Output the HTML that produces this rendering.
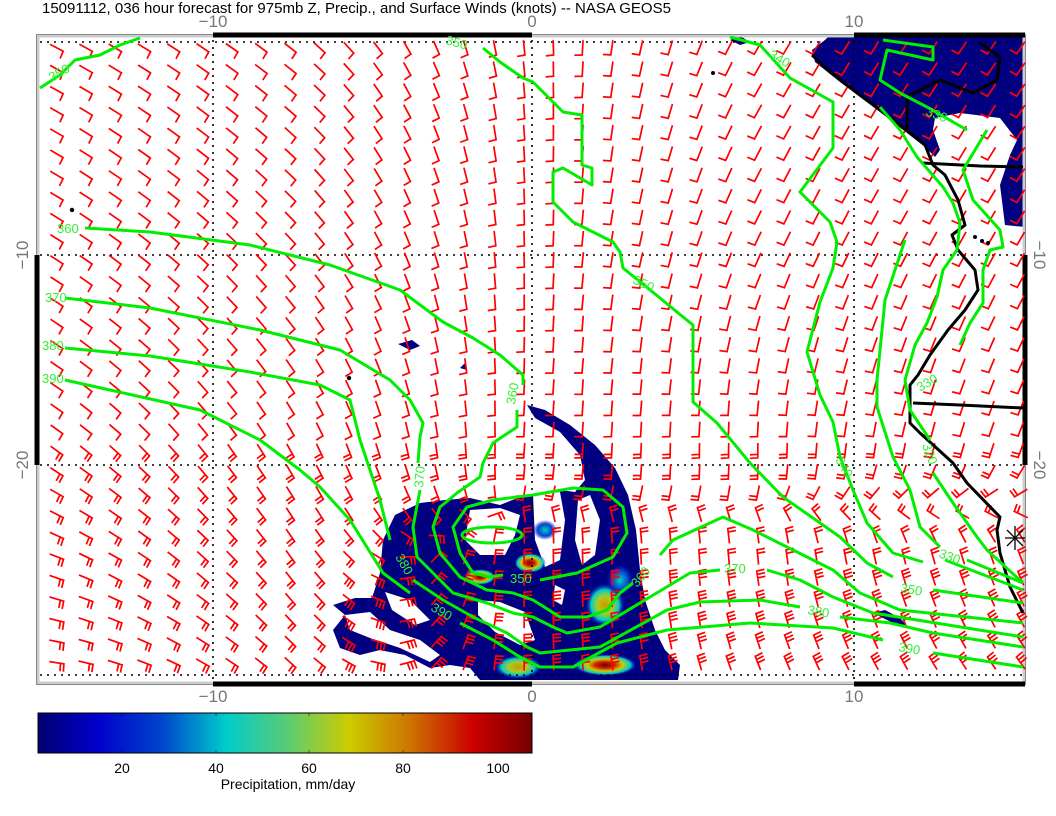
<!DOCTYPE html>
<html><head><meta charset="utf-8"><style>
html,body{margin:0;padding:0;background:#fff;width:1056px;height:816px;overflow:hidden}
svg{display:block}
text{font-family:"Liberation Sans",sans-serif}
</style></head><body>
<svg id="s" width="1056" height="816" viewBox="0 0 1056 816" xmlns="http://www.w3.org/2000/svg">
<defs>
<linearGradient id="cb" x1="0" x2="1" y1="0" y2="0">
<stop offset="0" stop-color="#000070"/>
<stop offset="0.12" stop-color="#0000cc"/>
<stop offset="0.25" stop-color="#0044cc"/>
<stop offset="0.38" stop-color="#00cccc"/>
<stop offset="0.5" stop-color="#55cc77"/>
<stop offset="0.63" stop-color="#cccc00"/>
<stop offset="0.75" stop-color="#cc7700"/>
<stop offset="0.88" stop-color="#cc0000"/>
<stop offset="1" stop-color="#770000"/>
</linearGradient>
<radialGradient id="hot"><stop offset="0" stop-color="#770000"/><stop offset="0.3" stop-color="#cc2200"/><stop offset="0.55" stop-color="#cccc00"/><stop offset="0.8" stop-color="#00cccc"/><stop offset="1" stop-color="#0000cc" stop-opacity="0"/></radialGradient>
<radialGradient id="warm"><stop offset="0" stop-color="#cc9900"/><stop offset="0.4" stop-color="#aacc22"/><stop offset="0.7" stop-color="#00cccc"/><stop offset="1" stop-color="#0000cc" stop-opacity="0"/></radialGradient>
<radialGradient id="cool"><stop offset="0" stop-color="#00cccc"/><stop offset="0.6" stop-color="#0044cc"/><stop offset="1" stop-color="#0000cc" stop-opacity="0"/></radialGradient>
</defs>
<text x="42" y="13" font-size="15" fill="#000">15091112, 036 hour forecast for 975mb Z, Precip., and Surface Winds (knots) -- NASA GEOS5</text>

<g fill="#000080">
<path d="M527,405 L545,410 L570,425 L595,445 L615,468 L628,495 L636,530 L640,570 L645,600 L655,630 L665,650 L680,665 L678,680 L480,680 L470,668 L450,665 L430,668 L405,655 L380,650 L360,655 L340,648 L333,630 L345,615 L333,605 L355,598 L372,598 L380,573 L383,540 L395,515 L420,503 L445,500 L470,498 L500,505 L525,495 L560,490 L575,492 L585,480 L580,455 L560,432 L535,418 Z"/>
<path d="M830,35 L1025,35 L1025,227 L1005,225 L1000,185 L1010,155 L1017,140 L1000,118 L960,113 L935,118 L933,130 L940,150 L935,157 L925,147 L880,112 L840,82 L815,62 L812,50 L825,40 Z"/>
<path d="M398,344 L412,340 L420,346 L410,350 Z"/>
<path d="M460,368 L465,363 L467,370 Z"/>
<path d="M873,613 L885,610 L900,618 L908,627 L895,624 Z"/>
<path d="M730,40 L740,36 L750,42 L740,45 Z"/>
</g>
<g fill="#fff">
<path d="M470,510 L500,508 L520,515 L515,535 L505,555 L480,555 L465,540 Z"/>
<path d="M533,495 L560,492 L565,520 L560,560 L545,567 L535,540 Z"/>
<path d="M578,500 L590,495 L600,520 L595,555 L582,565 L575,540 Z"/>
<path d="M478,600 L500,602 L525,612 L535,640 L520,645 L495,632 L478,615 Z"/>
<path d="M345,615 L370,612 L390,630 L420,640 L440,655 L430,662 L400,648 L370,638 L350,630 Z"/>
<path d="M385,592 L410,600 L430,620 L415,625 L392,610 Z"/>
<path d="M555,585 L565,590 L562,605 L553,600 Z"/>
</g>
<ellipse cx="530" cy="563" rx="16" ry="10" fill="url(#hot)"/>
<ellipse cx="480" cy="577" rx="16" ry="8" fill="url(#hot)"/>
<ellipse cx="605" cy="665" rx="32" ry="11" fill="url(#hot)"/>
<ellipse cx="518" cy="667" rx="24" ry="12" fill="url(#warm)"/>
<ellipse cx="605" cy="605" rx="20" ry="22" fill="url(#warm)"/>
<ellipse cx="545" cy="530" rx="12" ry="10" fill="url(#cool)"/>
<ellipse cx="620" cy="580" rx="14" ry="16" fill="url(#cool)"/>

<rect x="38" y="36" width="986" height="647" fill="none" stroke="#ccc" stroke-width="3"/>
<rect x="36.5" y="34.5" width="989" height="650" fill="none" stroke="#888" stroke-width="1"/>
<g stroke="#000" stroke-width="1.6" stroke-dasharray="2,5" fill="none">
<line x1="40" y1="42" x2="1022" y2="42"/><line x1="40" y1="255" x2="1022" y2="255"/>
<line x1="40" y1="465" x2="1022" y2="465"/><line x1="40" y1="675" x2="1022" y2="675"/>
<line x1="213" y1="40" x2="213" y2="680"/><line x1="532" y1="40" x2="532" y2="680"/><line x1="854" y1="40" x2="854" y2="680"/>
</g>
<g stroke="#000" stroke-width="5">
<line x1="213" y1="35" x2="532" y2="35"/><line x1="854" y1="35" x2="1025" y2="35"/>
<line x1="213" y1="684" x2="532" y2="684"/><line x1="854" y1="684" x2="1025" y2="684"/>
<line x1="37" y1="255" x2="37" y2="465"/><line x1="1025" y1="255" x2="1025" y2="465"/>
</g>

<g id="barbs" stroke="#ff0000" stroke-width="1.7" fill="none" stroke-linecap="square"></g>

<g stroke="#000" stroke-width="3" fill="none" stroke-linejoin="round">
<path d="M812,55 L830,72 L860,95 L900,125 L925,145 L933,165 L945,175 L958,200 L965,225 L952,235 L958,250 L975,270 L978,290 L965,310 L948,330 L930,355 L918,375 L910,385 L910,423 L920,433 L953,463 L967,483 L1000,517 L997,530 L1000,553 L1010,587 L1023,613"/>
<path d="M913,403 L960,405 L1023,408"/>
<path d="M923,163 L980,166 L1023,167"/>
<path d="M907,130 L907,97 L940,80 L973,93 L997,80 L1000,57 L980,43"/>
</g>
<g fill="#000"><circle cx="72" cy="210" r="2.2"/><circle cx="349" cy="378" r="2.2"/><circle cx="713" cy="73" r="2"/><circle cx="975" cy="237" r="2"/><circle cx="982" cy="241" r="2"/><circle cx="988" cy="243" r="2"/></g>
<g stroke="#000" stroke-width="1.3"><line x1="1005" y1="538" x2="1025" y2="538"/><line x1="1015" y1="526" x2="1015" y2="550"/><line x1="1007" y1="530" x2="1023" y2="546"/><line x1="1007" y1="546" x2="1023" y2="530"/></g>

<g stroke="#00ee00" stroke-width="3" fill="none" stroke-linejoin="round">
<path d="M40,88 L60,75 L75,60 L100,55 L120,45 L140,38"/>
<path d="M483,48 L500,62 L523,78 L533,82 L553,102 L563,112 L582,115 L582,135 L582,165 L592,168 L592,185 L563,168 L553,172 L553,202 L573,222 L613,242 L620,252 L623,268 L660,298 L683,317 L693,325 L693,402 L717,423 L750,463 L783,497 L840,537 L867,563 L893,577"/>
<path d="M933,590 L1023,603"/>
<path d="M730,37 L760,45 L790,78 L833,102 L833,148 L800,192 L830,222 L837,242 L833,268 L820,302 L807,352 L820,395 L833,422 L840,457 L853,490 L867,523 L893,553 L923,562"/>
<path d="M967,560 L1023,583"/>
<path d="M905,240 L885,300 L877,380 L877,407 L893,457 L910,490 L920,527 L940,547"/>
<path d="M945,560 L1023,590"/>
<path d="M883,40 L933,47 L933,60 L887,50 L880,80 L900,93 L927,107 L967,130"/>
<path d="M880,107 L900,130 L917,157 L943,187 L953,203 L960,223 L957,250 L943,270 L937,297 L927,323 L915,345 L905,380 L910,410 L930,440"/>
<path d="M987,130 L963,170 L973,200 L1000,230 L1003,247 L990,250 L983,270 L983,303 L970,323 L960,345"/>
<path d="M933,473 L953,503 L977,537 L987,550 L1023,583"/>
<path d="M85,228 L150,232 L250,245 L330,265 L400,290 L443,322 L473,338 L500,355 L523,375 L523,385"/>
<path d="M517,410 L517,427 L493,443 L483,463 L480,477 L457,493 L440,507 L433,527 L440,553 L460,577 L487,590 L513,593 L533,600 L560,617 L587,617 L607,610 L620,593 L633,583"/>
<path d="M660,555 L673,540 L723,517 L753,530 L787,547 L833,570 L860,593 L900,610 L1023,623"/>
<path d="M65,298 L150,308 L260,330 L340,350 L390,380 L410,400 L423,423 L420,437 L418,463"/>
<path d="M420,490 L413,527 L417,557 L440,580 L453,593 L487,603 L513,613 L533,617 L553,627 L567,633 L600,627 L650,597 L690,573 L720,570"/>
<path d="M767,570 L800,580 L833,597 L873,613 L917,620 L1023,637"/>
<path d="M65,348 L150,356 L250,372 L320,385 L350,400 L360,440 L380,500 L390,540"/>
<path d="M413,580 L443,600 L473,617 L507,633 L527,647 L540,653 L600,647 L667,610 L700,602 L760,600 L800,607"/>
<path d="M840,617 L890,623 L933,633 L1023,647"/>
<path d="M65,380 L110,390 L200,410 L260,440 L300,470 L320,487 L350,520 L383,573 L410,593"/>
<path d="M460,623 L493,640 L520,657 L540,667 L573,667 L617,643 L667,630 L750,623 L833,628 L883,640"/>
<path d="M933,653 L1023,667"/>
<path d="M540,580 L577,573 L613,557 L627,533 L623,507 L603,490 L573,488 L533,495 L493,500 L467,507 L453,527 L460,553 L473,573 L490,577 L503,575"/>
<ellipse cx="492" cy="535" rx="30" ry="8"/>
</g>
<g fill="#33ee33" font-size="13">
<text x="52" y="82" transform="rotate(-30 52 82)">350</text>
<text x="445" y="44" transform="rotate(15 445 44)">350</text>
<text x="57" y="233">360</text>
<text x="45" y="302">370</text>
<text x="42" y="350">380</text>
<text x="42" y="383">390</text>
<text x="632" y="283" transform="rotate(25 632 283)">350</text>
<text x="515" y="405" transform="rotate(-80 515 405)">360</text>
<text x="768" y="57" transform="rotate(30 768 57)">340</text>
<text x="925" y="115" transform="rotate(20 925 115)">330</text>
<text x="423" y="488" transform="rotate(-85 423 488)">370</text>
<text x="395" y="557" transform="rotate(60 395 557)">380</text>
<text x="430" y="610" transform="rotate(30 430 610)">390</text>
<text x="510" y="583">350</text>
<text x="637" y="588" transform="rotate(-50 637 588)">360</text>
<text x="724" y="573">370</text>
<text x="807" y="614" transform="rotate(10 807 614)">380</text>
<text x="898" y="651" transform="rotate(10 898 651)">390</text>
<text x="900" y="592" transform="rotate(10 900 592)">350</text>
<text x="938" y="557" transform="rotate(20 938 557)">330</text>
<text x="835" y="460" transform="rotate(60 835 460)">340</text>
<text x="922" y="445" transform="rotate(70 922 445)">320</text>
<text x="920" y="392" transform="rotate(-30 920 392)">330</text>
</g>

<g fill="#777" font-size="17" text-anchor="middle">
<text x="213" y="27">−10</text><text x="532" y="27">0</text><text x="854" y="27">10</text>
<text x="213" y="702">−10</text><text x="532" y="702">0</text><text x="854" y="702">10</text>
<text transform="translate(28,255) rotate(-90)">−10</text>
<text transform="translate(28,465) rotate(-90)">−20</text>
<text transform="translate(1034,255) rotate(90)">−10</text>
<text transform="translate(1034,465) rotate(90)">−20</text>
</g>

<rect x="38" y="713" width="494" height="40" fill="url(#cb)" stroke="#000" stroke-width="1"/>
<g stroke="#000" stroke-width="1" opacity="0.5">
<line x1="69" y1="713" x2="69" y2="716"/><line x1="122" y1="713" x2="122" y2="716"/><line x1="216" y1="713" x2="216" y2="716"/><line x1="309" y1="713" x2="309" y2="716"/><line x1="403" y1="713" x2="403" y2="716"/>
<line x1="122" y1="750" x2="122" y2="753"/><line x1="216" y1="750" x2="216" y2="753"/><line x1="309" y1="750" x2="309" y2="753"/><line x1="403" y1="750" x2="403" y2="753"/>
</g>
<g fill="#000" font-size="14" text-anchor="middle">
<text x="122" y="773">20</text><text x="216" y="773">40</text><text x="309" y="773">60</text><text x="403" y="773">80</text><text x="498" y="773">100</text>
<text x="288" y="789">Precipitation, mm/day</text>
</g>
</svg>
<script>
(function(){
var xs=[50,300,530,750,1020], ys=[50,250,450,560,690];
var A=[[28,38,85,120,125],[32,48,90,115,120],[35,62,95,90,110],[20,55,-90,-95,-110],[5,40,-90,-115,-130]];
function idx(arr,v){for(var i=0;i<arr.length-2;i++){if(v<arr[i+1])return i;}return arr.length-2;}
function ang(x,y){
 var i=idx(xs,x),j=idx(ys,y);
 var tx=Math.max(0,Math.min(1,(x-xs[i])/(xs[i+1]-xs[i]))),ty=Math.max(0,Math.min(1,(y-ys[j])/(ys[j+1]-ys[j])));
 var c=0,s=0,w=[[1-tx,1-ty,i,j],[tx,1-ty,i+1,j],[1-tx,ty,i,j+1],[tx,ty,i+1,j+1]];
 w.forEach(function(q){var a=A[q[3]][q[2]]*Math.PI/180,ww=q[0]*q[1];c+=ww*Math.cos(a);s+=ww*Math.sin(a);});
 return Math.atan2(s,c);
}
var d="";
for(var j=0;j<31;j++)for(var i=0;i<34;i++){
 var x=57+i*29.2,y=48+j*21.2; if(y>682)continue;
 var a=ang(x,y),L=14,c=Math.cos(a),s=Math.sin(a);
 var sx=x-L/2*c,sy=y-L/2*s,tx=sx+L*c,ty=sy+L*s;
 d+="M"+sx.toFixed(1)+","+sy.toFixed(1)+"L"+tx.toFixed(1)+","+ty.toFixed(1);
 var n=y<440?1:(y<575?2:3); if(x<340&&n>2)n=2;
 var fa=a+85*Math.PI/180;
 for(var k=0;k<n;k++){var bx=tx-k*3.5*c,by=ty-k*3.5*s;
  d+="M"+bx.toFixed(1)+","+by.toFixed(1)+"l"+(7*Math.cos(fa)).toFixed(1)+","+(7*Math.sin(fa)).toFixed(1);}
}
var p=document.createElementNS("http://www.w3.org/2000/svg","path");p.setAttribute("d",d);
document.getElementById("barbs").appendChild(p);
})();
</script>
</body></html>
